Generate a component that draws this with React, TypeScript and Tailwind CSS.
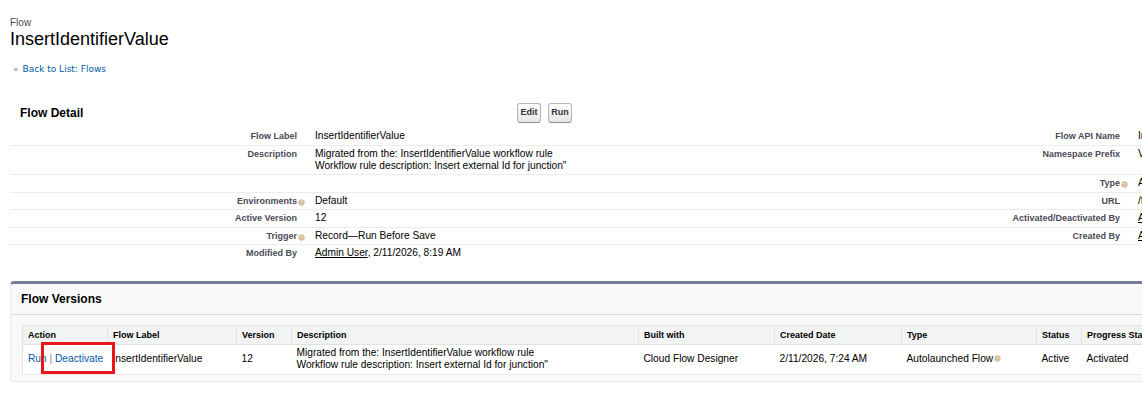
import React from 'react';

const Orb = ({ className = '' }: { className?: string }) => (
  <svg viewBox="0 0 8 8" className={`w-[7px] h-[7px] ${className}`}>
    <circle cx="4" cy="4" r="3.6" fill="#d3be96" />
    <path d="M2.9 3.1 a1.1 1.1 0 1 1 1.5 1 v0.6" stroke="#f3ead8" strokeWidth="0.9" fill="none" />
    <circle cx="4.4" cy="6" r="0.45" fill="#f3ead8" />
  </svg>
);

const Label = ({ text, help }: { text: string; help?: boolean }) => (
  <span className="relative">
    {text}
    {help && <Orb className="absolute -right-[8px] top-[3px]" />}
  </span>
);

const detailRows: { l1: string; h1?: boolean; d1: React.ReactNode; l2: string; h2?: boolean; d2: React.ReactNode; last?: boolean }[] = [
  { l1: 'Flow Label', d1: 'InsertIdentifierValue', l2: 'Flow API Name', d2: 'InsertIdentifierValue' },
  {
    l1: 'Description',
    d1: (
      <>
        Migrated from the: InsertIdentifierValue workflow rule
        <br />
        Workflow rule description: Insert external Id for junction"
      </>
    ),
    l2: 'Namespace Prefix',
    d2: 'Vlocity',
  },
  { l1: '', d1: '\u00a0', l2: 'Type', h2: true, d2: 'Autolaunched Flow' },
  { l1: 'Environments', h1: true, d1: 'Default', l2: 'URL', d2: '/flow/InsertIdentifierValue' },
  { l1: 'Active Version', d1: '12', l2: 'Activated/Deactivated By', d2: <span className="underline">Admin User</span> },
  { l1: 'Trigger', h1: true, d1: 'Record\u2014Run Before Save', l2: 'Created By', d2: <span className="underline">Admin User</span> },
  {
    l1: 'Modified By',
    d1: (
      <>
        <span className="underline">Admin User</span>, 2/11/2026, 8:19 AM
      </>
    ),
    l2: '',
    d2: '',
    last: true,
  },
];

const versionCols = [
  { name: 'Action', w: 'w-[85px]' },
  { name: 'Flow Label', w: 'w-[129px]' },
  { name: 'Version', w: 'w-[55px]' },
  { name: 'Description', w: 'w-[347px]' },
  { name: 'Built with', w: 'w-[136px]' },
  { name: 'Created Date', w: 'w-[127px]' },
  { name: 'Type', w: 'w-[135px]' },
  { name: 'Status', w: 'w-[45px]' },
  { name: 'Progress Status', w: 'w-[140px]' },
  { name: 'Last Modified Date', w: 'w-[160px]' },
];

export default function App() {
  return (
    <div className="min-h-screen w-full overflow-hidden bg-white font-['Liberation_Sans',Arial,sans-serif] text-black">
      <div className="w-[1700px] px-[10px] pt-[17px]">
        {/* page header */}
        <div className="text-[10px] leading-[11px] text-[#4a4a56]">Flow</div>
        <h1 className="text-[18px] leading-[22px]">InsertIdentifierValue</h1>
        <div className="mt-[13px] flex items-center pl-[3px] font-['DejaVu_Sans',Verdana,sans-serif] text-[9px] leading-[12px]">
          <span className="mr-[4px] text-[#8a8a8a]">«</span>
          <a className="text-[#015ba7]">Back to List: Flows</a>
        </div>

        {/* Flow Detail */}
        <div className="mt-[27px] flex h-[21px] items-center">
          <h2 className="w-[507px] pl-[10px] text-[12px] font-bold">Flow Detail</h2>
          <div className="flex gap-[7px]">
            {['Edit', 'Run'].map((b) => (
              <button
                key={b}
                className="h-[20px] w-[24px] rounded-[3px] border border-[#b5b5b5] border-b-[#8a8a8a] bg-gradient-to-b from-white to-[#e6e6e6] text-[9px] font-bold text-[#333]"
              >
                {b}
              </button>
            ))}
          </div>
        </div>

        <table className="mt-[5px] w-[1661px] table-fixed border-collapse text-[10.2px] leading-[12px]">
          <colgroup>
            <col className="w-[296px]" />
            <col className="w-[524px]" />
            <col className="w-[299px]" />
            <col className="w-[542px]" />
          </colgroup>
          <tbody>
            {detailRows.map((r, i) => (
              <tr key={i} className={r.last ? '' : 'border-b border-[#ececec]'}>
                <td className="py-[2.25px] pr-[9px] text-right align-top text-[9px] font-bold text-[#4a4a56]">
                  <Label text={r.l1} help={r.h1} />
                </td>
                <td className="py-[2.25px] pl-[9px] align-top">{r.d1}</td>
                <td className="py-[2.25px] pr-[9px] text-right align-top text-[9px] font-bold text-[#4a4a56]">
                  <Label text={r.l2} help={r.h2} />
                </td>
                <td className="py-[2.25px] pl-[9px] align-top">{r.d2}</td>
              </tr>
            ))}
          </tbody>
        </table>

        {/* Flow Versions */}
        <div className="mt-[19px] w-[1661px] rounded-[4px] border border-t-[3px] border-[#eaeaea] border-t-[#747e96] bg-[#f8f8f8] pb-[6px]">
          <div className="flex h-[31px] items-center border-b border-[#dbdbdb] pl-[10px]">
            <h3 className="text-[12px] font-bold">Flow Versions</h3>
          </div>
          <div className="relative ml-[11px] mt-[10px]">
            <table className="table-fixed border-collapse border border-[#e0e3e5] bg-white text-[10.2px] leading-[12px]">
              <colgroup>
                {versionCols.map((c) => (
                  <col key={c.name} className={c.w} />
                ))}
              </colgroup>
              <thead>
                <tr className="bg-[#f2f3f3]">
                  {versionCols.map((c) => (
                    <th
                      key={c.name}
                      className="whitespace-nowrap border border-[#e0e3e5] py-[3px] pl-[5px] text-left text-[9px] font-bold"
                    >
                      {c.name}
                    </th>
                  ))}
                </tr>
              </thead>
              <tbody>
                <tr className="border-b border-[#ececec]">
                  <td className="pt-[2px] pb-[3px] pl-[5px] align-middle whitespace-nowrap">
                    <a className="text-[#015ba7]">Run</a>
                    <span className="text-[#888]"> | </span>
                    <a className="text-[#015ba7]">Deactivate</a>
                  </td>
                  <td className="pt-[2px] pb-[3px] pl-[5px]">InsertIdentifierValue</td>
                  <td className="pt-[2px] pb-[3px] pl-[5px]">12</td>
                  <td className="pt-[2px] pb-[3px] pl-[5px]">
                    Migrated from the: InsertIdentifierValue workflow rule
                    <br />
                    Workflow rule description: Insert external Id for junction"
                  </td>
                  <td className="pt-[2px] pb-[3px] pl-[5px]">Cloud Flow Designer</td>
                  <td className="pt-[2px] pb-[3px] pl-[5px]">2/11/2026, 7:24 AM</td>
                  <td className="pt-[2px] pb-[3px] pl-[5px]">
                    <span className="inline-flex items-center gap-[1px]">
                      Autolaunched Flow
                      <Orb />
                    </span>
                  </td>
                  <td className="pt-[2px] pb-[3px] pl-[5px]">Active</td>
                  <td className="pt-[2px] pb-[3px] pl-[5px]">Activated</td>
                  <td className="pt-[2px] pb-[3px] pl-[5px]">2/11/2026, 8:19 AM</td>
                </tr>
              </tbody>
            </table>
            {/* annotation box */}
            <div className="pointer-events-none absolute left-[19px] top-[17px] h-[32px] w-[74px] border-[3px] border-[#e8151b]" />
          </div>
        </div>
      </div>
    </div>
  );
}
